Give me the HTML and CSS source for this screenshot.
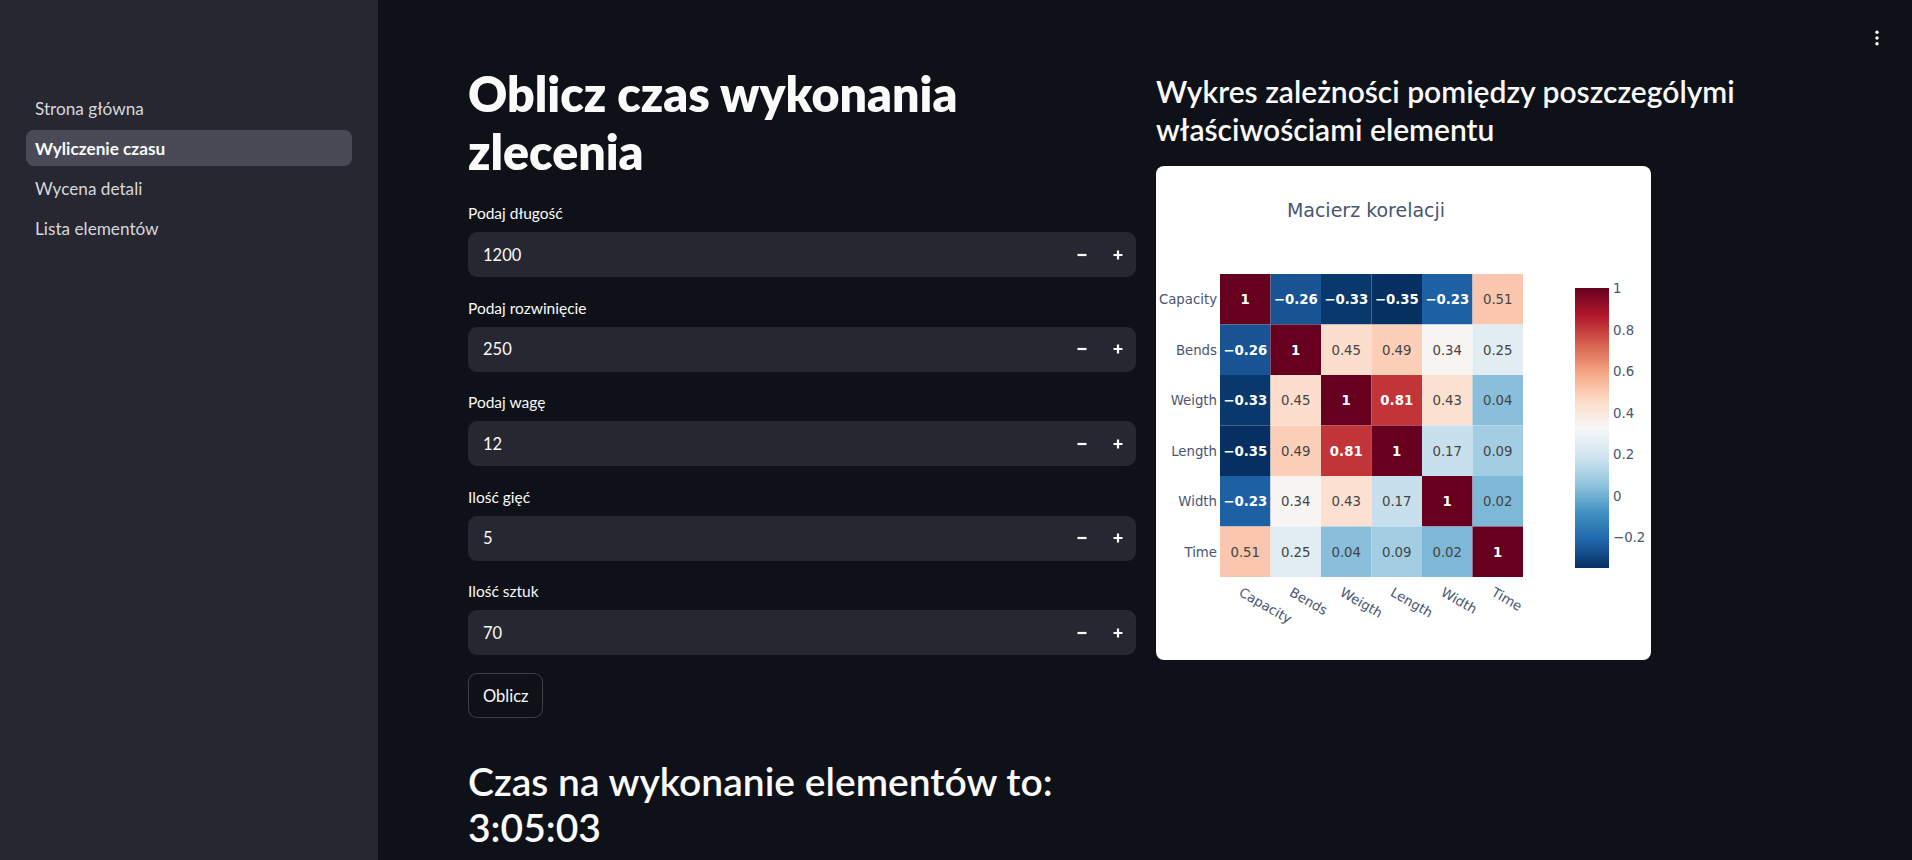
FILE: index.html
```html
<!DOCTYPE html>
<html lang="pl">
<head>
<meta charset="utf-8">
<title>Wyliczenie czasu</title>
<link rel="stylesheet" href="styles.css">
</head>
<body>
<div class="app">
  <aside class="sidebar">
    <nav class="nav">
      <a class="nav-item">Strona główna</a>
      <a class="nav-item active">Wyliczenie czasu</a>
      <a class="nav-item">Wycena detali</a>
      <a class="nav-item">Lista elementów</a>
    </nav>
  </aside>
  <main class="main">
    <button class="menu-btn" aria-label="menu">
      <svg width="6" height="16" viewBox="0 0 6 16"><circle cx="3" cy="2.3" r="1.7" fill="#fafafa"/><circle cx="3" cy="8" r="1.7" fill="#fafafa"/><circle cx="3" cy="13.7" r="1.7" fill="#fafafa"/></svg>
    </button>
    <div class="columns">
      <section class="col">
        <h1 class="title">Oblicz czas wykonania<br>zlecenia</h1>
        <div class="fields">
          <div class="field">
            <label class="field-label">Podaj długość</label>
            <div class="num-input"><span class="num-value">1200</span><span class="step"><svg width="12" height="12" viewBox="0 0 12 12"><path d="M1.5 6h9" stroke="#fafafa" stroke-width="2.2"/></svg></span><span class="step"><svg width="12" height="12" viewBox="0 0 12 12"><path d="M1.5 6h9M6 1.5v9" stroke="#fafafa" stroke-width="2.2"/></svg></span></div>
          </div>
          <div class="field">
            <label class="field-label">Podaj rozwinięcie</label>
            <div class="num-input"><span class="num-value">250</span><span class="step"><svg width="12" height="12" viewBox="0 0 12 12"><path d="M1.5 6h9" stroke="#fafafa" stroke-width="2.2"/></svg></span><span class="step"><svg width="12" height="12" viewBox="0 0 12 12"><path d="M1.5 6h9M6 1.5v9" stroke="#fafafa" stroke-width="2.2"/></svg></span></div>
          </div>
          <div class="field">
            <label class="field-label">Podaj wagę</label>
            <div class="num-input"><span class="num-value">12</span><span class="step"><svg width="12" height="12" viewBox="0 0 12 12"><path d="M1.5 6h9" stroke="#fafafa" stroke-width="2.2"/></svg></span><span class="step"><svg width="12" height="12" viewBox="0 0 12 12"><path d="M1.5 6h9M6 1.5v9" stroke="#fafafa" stroke-width="2.2"/></svg></span></div>
          </div>
          <div class="field">
            <label class="field-label">Ilość gięć</label>
            <div class="num-input"><span class="num-value">5</span><span class="step"><svg width="12" height="12" viewBox="0 0 12 12"><path d="M1.5 6h9" stroke="#fafafa" stroke-width="2.2"/></svg></span><span class="step"><svg width="12" height="12" viewBox="0 0 12 12"><path d="M1.5 6h9M6 1.5v9" stroke="#fafafa" stroke-width="2.2"/></svg></span></div>
          </div>
          <div class="field">
            <label class="field-label">Ilość sztuk</label>
            <div class="num-input"><span class="num-value">70</span><span class="step"><svg width="12" height="12" viewBox="0 0 12 12"><path d="M1.5 6h9" stroke="#fafafa" stroke-width="2.2"/></svg></span><span class="step"><svg width="12" height="12" viewBox="0 0 12 12"><path d="M1.5 6h9M6 1.5v9" stroke="#fafafa" stroke-width="2.2"/></svg></span></div>
          </div>
          <div><button class="btn">Oblicz</button></div>
        </div>
        <h2 class="result">Czas na wykonanie elementów to:<br>3:05:03</h2>
      </section>
      <section class="col">
        <h3 class="subtitle">Wykres zależności pomiędzy poszczególymi<br>właściwościami elementu</h3>
        <div class="chart-card">
          <svg class="chart" width="495" height="494" viewBox="0 0 495 494" font-family="'DejaVu Sans', Verdana, sans-serif" font-size="13.3">
            <defs>
              <linearGradient id="rdbu" x1="0" y1="0" x2="0" y2="1">
                <stop offset="0" stop-color="rgb(103,0,31)"/>
                <stop offset="0.1" stop-color="rgb(178,24,43)"/>
                <stop offset="0.2" stop-color="rgb(214,96,77)"/>
                <stop offset="0.3" stop-color="rgb(244,165,130)"/>
                <stop offset="0.4" stop-color="rgb(253,219,199)"/>
                <stop offset="0.5" stop-color="rgb(247,247,247)"/>
                <stop offset="0.6" stop-color="rgb(209,229,240)"/>
                <stop offset="0.7" stop-color="rgb(146,197,222)"/>
                <stop offset="0.8" stop-color="rgb(67,147,195)"/>
                <stop offset="0.9" stop-color="rgb(33,102,172)"/>
                <stop offset="1" stop-color="rgb(5,48,97)"/>
              </linearGradient>
            </defs>
            <text x="210" y="50.5" text-anchor="middle" font-size="19" fill="#4a5670">Macierz korelacji</text>

            <g class="cells">
              <rect x="64" y="108" width="50.5" height="50.5" fill="rgb(103,0,31)"/>
              <rect x="114.5" y="108" width="50.5" height="50.5" fill="rgb(24,84,147)"/>
              <rect x="165" y="108" width="50.5" height="50.5" fill="rgb(9,56,108)"/>
              <rect x="215.5" y="108" width="50.5" height="50.5" fill="rgb(5,48,97)"/>
              <rect x="266" y="108" width="50.5" height="50.5" fill="rgb(30,96,164)"/>
              <rect x="316.5" y="108" width="50.5" height="50.5" fill="rgb(250,199,174)"/>

              <rect x="64" y="158.5" width="50.5" height="50.5" fill="rgb(24,84,147)"/>
              <rect x="114.5" y="158.5" width="50.5" height="50.5" fill="rgb(103,0,31)"/>
              <rect x="165" y="158.5" width="50.5" height="50.5" fill="rgb(253,221,203)"/>
              <rect x="215.5" y="158.5" width="50.5" height="50.5" fill="rgb(251,207,184)"/>
              <rect x="266" y="158.5" width="50.5" height="50.5" fill="rgb(248,244,242)"/>
              <rect x="316.5" y="158.5" width="50.5" height="50.5" fill="rgb(226,237,243)"/>

              <rect x="64" y="209" width="50.5" height="50.5" fill="rgb(9,56,108)"/>
              <rect x="114.5" y="209" width="50.5" height="50.5" fill="rgb(253,221,203)"/>
              <rect x="165" y="209" width="50.5" height="50.5" fill="rgb(103,0,31)"/>
              <rect x="215.5" y="209" width="50.5" height="50.5" fill="rgb(193,53,57)"/>
              <rect x="266" y="209" width="50.5" height="50.5" fill="rgb(252,225,210)"/>
              <rect x="316.5" y="209" width="50.5" height="50.5" fill="rgb(137,191,219)"/>

              <rect x="64" y="259.5" width="50.5" height="50.5" fill="rgb(5,48,97)"/>
              <rect x="114.5" y="259.5" width="50.5" height="50.5" fill="rgb(251,207,184)"/>
              <rect x="165" y="259.5" width="50.5" height="50.5" fill="rgb(193,53,57)"/>
              <rect x="215.5" y="259.5" width="50.5" height="50.5" fill="rgb(103,0,31)"/>
              <rect x="266" y="259.5" width="50.5" height="50.5" fill="rgb(200,224,237)"/>
              <rect x="316.5" y="259.5" width="50.5" height="50.5" fill="rgb(162,205,227)"/>

              <rect x="64" y="310" width="50.5" height="50.5" fill="rgb(30,96,164)"/>
              <rect x="114.5" y="310" width="50.5" height="50.5" fill="rgb(248,244,242)"/>
              <rect x="165" y="310" width="50.5" height="50.5" fill="rgb(252,225,210)"/>
              <rect x="215.5" y="310" width="50.5" height="50.5" fill="rgb(200,224,237)"/>
              <rect x="266" y="310" width="50.5" height="50.5" fill="rgb(103,0,31)"/>
              <rect x="316.5" y="310" width="50.5" height="50.5" fill="rgb(126,184,215)"/>

              <rect x="64" y="360.5" width="50.5" height="50.5" fill="rgb(250,199,174)"/>
              <rect x="114.5" y="360.5" width="50.5" height="50.5" fill="rgb(226,237,243)"/>
              <rect x="165" y="360.5" width="50.5" height="50.5" fill="rgb(137,191,219)"/>
              <rect x="215.5" y="360.5" width="50.5" height="50.5" fill="rgb(162,205,227)"/>
              <rect x="266" y="360.5" width="50.5" height="50.5" fill="rgb(126,184,215)"/>
              <rect x="316.5" y="360.5" width="50.5" height="50.5" fill="rgb(103,0,31)"/>
            </g>

            <g class="vals" text-anchor="middle">
              <text x="89.25" y="138" fill="#fff" class="w">1</text>
              <text x="139.75" y="138" fill="#fff" class="w">−0.26</text>
              <text x="190.25" y="138" fill="#fff" class="w">−0.33</text>
              <text x="240.75" y="138" fill="#fff" class="w">−0.35</text>
              <text x="291.25" y="138" fill="#fff" class="w">−0.23</text>
              <text x="341.75" y="138" fill="#444">0.51</text>

              <text x="89.25" y="188.5" fill="#fff" class="w">−0.26</text>
              <text x="139.75" y="188.5" fill="#fff" class="w">1</text>
              <text x="190.25" y="188.5" fill="#444">0.45</text>
              <text x="240.75" y="188.5" fill="#444">0.49</text>
              <text x="291.25" y="188.5" fill="#444">0.34</text>
              <text x="341.75" y="188.5" fill="#444">0.25</text>

              <text x="89.25" y="239" fill="#fff" class="w">−0.33</text>
              <text x="139.75" y="239" fill="#444">0.45</text>
              <text x="190.25" y="239" fill="#fff" class="w">1</text>
              <text x="240.75" y="239" fill="#fff" class="w">0.81</text>
              <text x="291.25" y="239" fill="#444">0.43</text>
              <text x="341.75" y="239" fill="#444">0.04</text>

              <text x="89.25" y="289.5" fill="#fff" class="w">−0.35</text>
              <text x="139.75" y="289.5" fill="#444">0.49</text>
              <text x="190.25" y="289.5" fill="#fff" class="w">0.81</text>
              <text x="240.75" y="289.5" fill="#fff" class="w">1</text>
              <text x="291.25" y="289.5" fill="#444">0.17</text>
              <text x="341.75" y="289.5" fill="#444">0.09</text>

              <text x="89.25" y="340" fill="#fff" class="w">−0.23</text>
              <text x="139.75" y="340" fill="#444">0.34</text>
              <text x="190.25" y="340" fill="#444">0.43</text>
              <text x="240.75" y="340" fill="#444">0.17</text>
              <text x="291.25" y="340" fill="#fff" class="w">1</text>
              <text x="341.75" y="340" fill="#444">0.02</text>

              <text x="89.25" y="390.5" fill="#444">0.51</text>
              <text x="139.75" y="390.5" fill="#444">0.25</text>
              <text x="190.25" y="390.5" fill="#444">0.04</text>
              <text x="240.75" y="390.5" fill="#444">0.09</text>
              <text x="291.25" y="390.5" fill="#444">0.02</text>
              <text x="341.75" y="390.5" fill="#fff" class="w">1</text>
            </g>

            <g class="ylabels" text-anchor="end" fill="#4a5670">
              <text x="61" y="138">Capacity</text>
              <text x="61" y="188.5">Bends</text>
              <text x="61" y="239">Weigth</text>
              <text x="61" y="289.5">Length</text>
              <text x="61" y="340">Width</text>
              <text x="61" y="390.5">Time</text>
            </g>

            <g class="xlabels" fill="#4a5670">
              <text x="82" y="429" transform="rotate(30 82 429)">Capacity</text>
              <text x="132.5" y="429" transform="rotate(30 132.5 429)">Bends</text>
              <text x="183" y="429" transform="rotate(30 183 429)">Weigth</text>
              <text x="233.5" y="429" transform="rotate(30 233.5 429)">Length</text>
              <text x="284" y="429" transform="rotate(30 284 429)">Width</text>
              <text x="334.5" y="429" transform="rotate(30 334.5 429)">Time</text>
            </g>

            <rect x="419" y="122" width="34" height="280" fill="url(#rdbu)"/>
            <g class="cbticks" fill="#4a5670">
              <text x="457" y="127">1</text>
              <text x="457" y="168.5">0.8</text>
              <text x="457" y="210">0.6</text>
              <text x="457" y="251.5">0.4</text>
              <text x="457" y="293">0.2</text>
              <text x="457" y="334.5">0</text>
              <text x="457" y="376">−0.2</text>
            </g>
          </svg>
        </div>
      </section>
    </div>
  </main>
</div>
</body>
</html>
```

FILE: styles.css
```css
* { box-sizing: border-box; }

html, body {
  margin: 0;
  padding: 0;
  background: #0e1117;
  color: #fafafa;
  font-family: Lato, "Noto Sans", "DejaVu Sans", sans-serif;
}

.app {
  display: flex;
  min-height: 860px;
}

.sidebar {
  width: 378px;
  flex-shrink: 0;
  background: #262730;
  padding: 90px 26px 0 26px;
}

.nav {
  display: flex;
  flex-direction: column;
  gap: 4px;
}

.nav-item {
  height: 36px;
  display: flex;
  align-items: center;
  padding: 0 9px;
  border-radius: 8px;
  font-size: 17.2px;
  color: #d8d8dc;
  cursor: pointer;
}

.nav-item.active {
  background: #494a56;
  color: #fafafa;
  font-weight: 700;
}

.main {
  flex: 1;
  position: relative;
  padding: 64px 88px 0 90px;
}

.menu-btn {
  position: absolute;
  top: 30px;
  right: 32px;
  background: none;
  border: 0;
  padding: 0;
  width: 6px;
  height: 16px;
  display: flex;
}

.columns {
  display: grid;
  grid-template-columns: 1fr 1fr;
  column-gap: 20px;
  align-items: start;
}

.col {
  display: flex;
  flex-direction: column;
  min-width: 0;
}

.title {
  margin: 0;
  font-size: 48.3px;
  line-height: 58px;
  font-weight: 800;
  color: #fafafa;
}

.fields {
  display: flex;
  flex-direction: column;
  gap: 19.5px;
  margin-top: 22px;
}

.field {
  display: flex;
  flex-direction: column;
  gap: 8px;
}

.field-label {
  height: 22px;
  line-height: 22px;
  font-size: 15.5px;
  color: #fafafa;
}

.num-input {
  height: 45px;
  display: flex;
  align-items: center;
  background: #262730;
  border-radius: 9px;
  padding-left: 15px;
}

.num-value {
  flex: 1;
  font-size: 16.5px;
  color: #fafafa;
}

.step {
  width: 36px;
  height: 45px;
  display: flex;
  align-items: center;
  justify-content: center;
}

.btn {
  height: 45px;
  padding: 0 14px;
  background: #0e1117;
  border: 1px solid rgba(250, 250, 250, 0.2);
  border-radius: 9px;
  color: #fafafa;
  font-family: inherit;
  font-size: 16.5px;
  margin-top: -1.5px;
}

.result {
  margin: 40px 0 0 0;
  font-size: 39px;
  line-height: 46px;
  font-weight: 600;
  color: #fafafa;
}

.subtitle {
  margin: 8px 0 0 0;
  font-size: 30px;
  line-height: 38px;
  font-weight: 600;
  color: #fafafa;
}

.chart-card {
  margin-top: 18px;
  width: 495px;
  height: 494px;
  background: #ffffff;
  border-radius: 8px;
  overflow: hidden;
}

.chart {
  display: block;
}

.chart .w {
  font-weight: 600;
}
```
